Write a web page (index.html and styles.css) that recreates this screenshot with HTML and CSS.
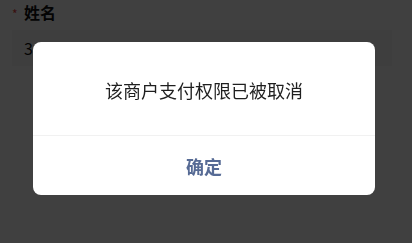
FILE: index.html
```html
<!DOCTYPE html>
<html lang="zh-CN">
<head>
<meta charset="utf-8">
<title>提示</title>
<link rel="stylesheet" href="styles.css">
</head>
<body>
<div class="page">
  <div class="field">
    <div class="label"><span class="req">*</span><span class="label-text">姓名</span></div>
    <div class="input">3</div>
  </div>
</div>
<div class="mask">
  <div class="dialog">
    <div class="dialog-body">该商户支付权限已被取消</div>
    <div class="dialog-footer">确定</div>
  </div>
</div>
</body>
</html>
```
FILE: styles.css
```css
html, body {
  margin: 0;
  padding: 0;
  width: 412px;
  height: 243px;
  overflow: hidden;
  background: #ffffff;
  font-family: "Noto Sans CJK SC", "Noto Sans", sans-serif;
}
.page {
  padding: 2px 0 0 12px;
}
.field {
  display: flex;
  flex-direction: column;
}
.label {
  display: flex;
  align-items: center;
  height: 20px;
}
.req {
  color: #e64340;
  font-size: 12px;
  width: 12px;
  line-height: 1;
  padding-top: 3px;
}
.label-text {
  font-size: 16px;
  font-weight: 700;
  color: #111111;
}
.input {
  margin-top: 8px;
  height: 36px;
  width: 380px;
  background: #f8f8f8;
  color: #111111;
  font-size: 16px;
  line-height: 36px;
  padding-left: 12px;
  box-sizing: border-box;
}
.mask {
  position: fixed;
  inset: 0;
  background: rgba(0, 0, 0, 0.75);
  display: flex;
  align-items: flex-start;
  padding: 42px 0 0 33px;
}
.dialog {
  width: 342px;
  height: 153px;
  background: #ffffff;
  border-radius: 8px;
  display: flex;
  flex-direction: column;
  overflow: hidden;
}
.dialog-body {
  height: 94px;
  display: flex;
  align-items: center;
  justify-content: center;
  font-size: 18px;
  color: #1f1f1f;
  border-bottom: 1px solid #f1f1f1;
  padding-top: 2px;
  box-sizing: border-box;
}
.dialog-footer {
  flex: 1;
  display: flex;
  align-items: center;
  justify-content: center;
  font-size: 18px;
  font-weight: 700;
  color: #576b95;
}
```
